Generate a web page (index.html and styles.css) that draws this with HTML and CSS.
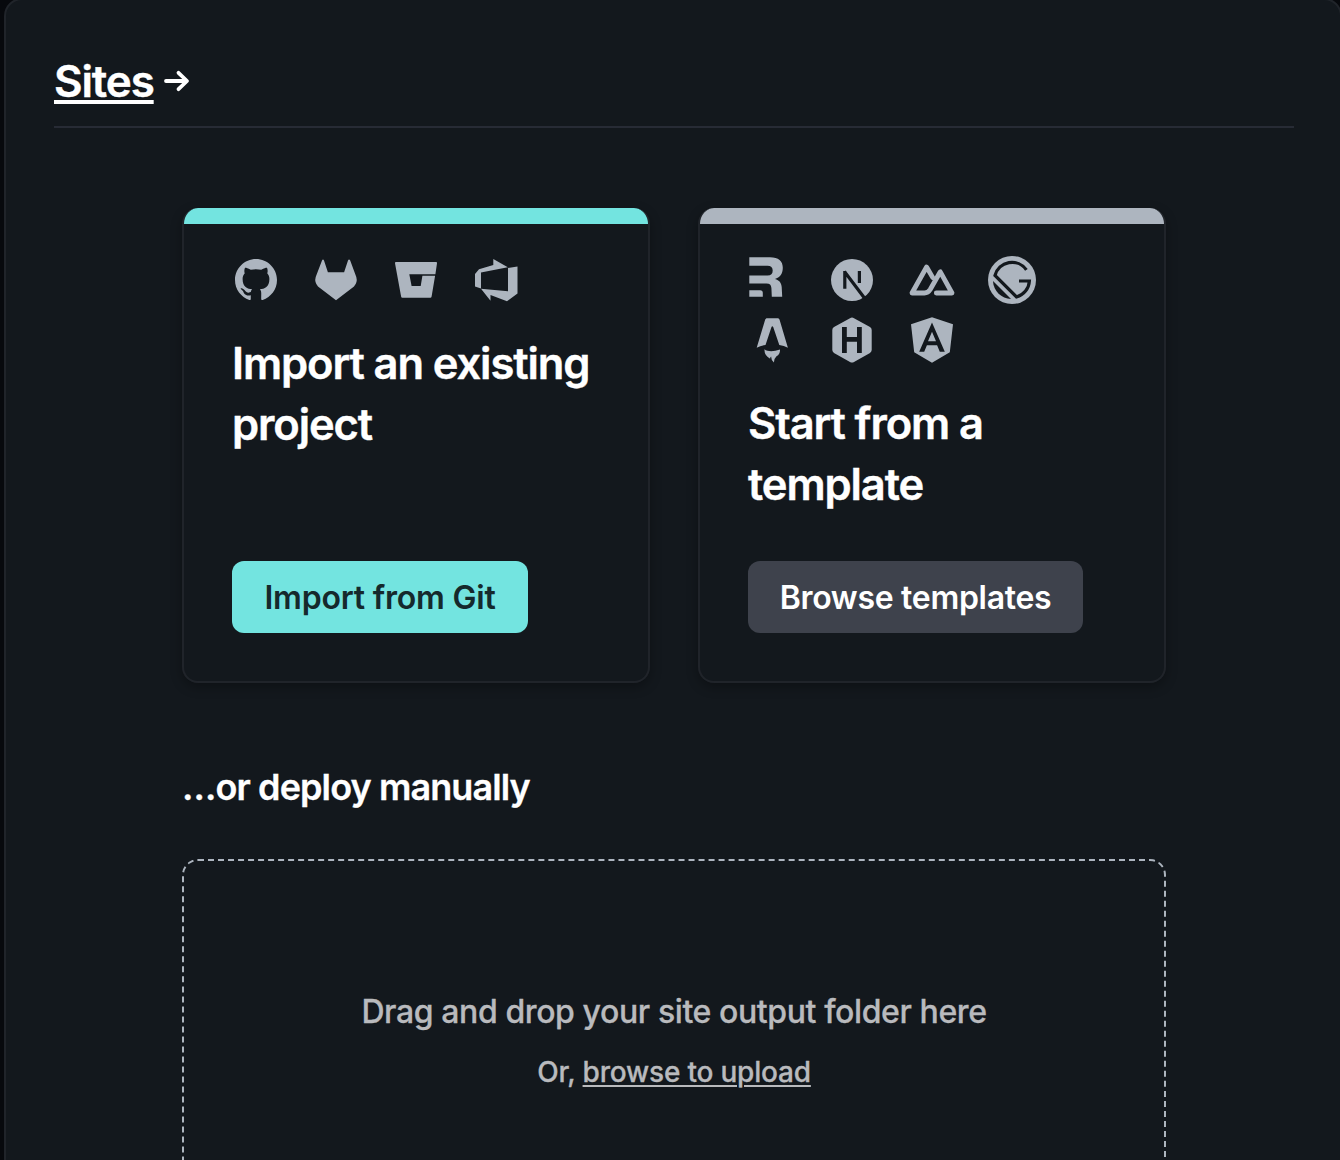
FILE: index.html
```html
<!DOCTYPE html>
<html lang="en">
<head>
<meta charset="utf-8">
<title>Sites</title>
<link rel="stylesheet" href="styles.css">
</head>
<body>
<main class="panel">
  <header class="panel-header">
    <h2 class="panel-title"><a class="title-link" href="#">Sites</a></h2>
    <svg class="arrow" viewBox="0 0 26 22"><path d="M2 11H22M14.5 2.8 23 11 14.5 19.2"/></svg>
  </header>
  <div class="content">
    <div class="cards">
      <section class="card card-primary">
        <div class="icons">
          <svg class="icon" viewBox="0 0 48 48"><path transform="translate(-1.2 -1.2) scale(2.1)" d="M12 2C6.477 2 2 6.477 2 12c0 4.42 2.865 8.17 6.839 9.49.5.092.682-.217.682-.482 0-.237-.008-.866-.013-1.7-2.782.603-3.369-1.34-3.369-1.34-.454-1.156-1.11-1.463-1.11-1.463-.908-.62.069-.608.069-.608 1.003.07 1.531 1.03 1.531 1.03.892 1.529 2.341 1.087 2.91.831.092-.646.35-1.086.636-1.336-2.22-.253-4.555-1.11-4.555-4.943 0-1.091.39-1.984 1.029-2.683-.103-.253-.446-1.27.098-2.647 0 0 .84-.269 2.75 1.025A9.578 9.578 0 0112 6.836c.85.004 1.705.114 2.504.336 1.909-1.294 2.747-1.025 2.747-1.025.546 1.377.203 2.394.1 2.647.64.699 1.028 1.592 1.028 2.683 0 3.842-2.339 4.687-4.566 4.935.359.309.678.919.678 1.852 0 1.336-.012 2.415-.012 2.743 0 .267.18.578.688.48C19.138 20.167 22 16.418 22 12c0-5.523-4.477-10-10-10z"/></svg>
          <svg class="icon" viewBox="0 0 48 48"><path d="M10 4.4Q11 2.6 12 4.4L15.9 16.3H32.1L36 4.4Q37 2.6 38.2 4.4L44.3 21Q45.8 26.2 42 30.4L24 44.2 6 30.4Q2.2 26.2 3.7 21Z"/></svg>
          <svg class="icon" viewBox="0 0 48 48"><path d="M4 6H44Q45.3 6 45 7.3L43.4 18.2H17.3L19.6 30H28.7L30.4 19.7H43.1L39.6 40.6Q39.4 41.8 38.3 41.8H10.4Q9.3 41.8 9.1 40.6L3 7.3Q2.8 6 4 6Z"/></svg>
          <svg class="icon" viewBox="0 0 48 48"><path d="M21.3 3 35.8 11.3 9 16.6V32.6L3 30.6V18L7 13.2 21.3 9ZM36 11.9 45.5 10.5V37.6L35 45.2 18.5 39V44.8L9 32.7 36 35.2Z"/></svg>
        </div>
        <h3 class="card-title">Import an existing project</h3>
        <button class="button button-primary">Import from Git</button>
      </section>
      <section class="card card-secondary">
        <div class="icons">
          <svg class="icon" viewBox="0 0 48 48"><path d="M1.3 1.3H22C30.5 1.3 34.8 5.2 34.8 11.8 34.8 18 31.7 21.7 27 22.9 31.3 24 33.4 26.7 33.7 31L34.2 40.8H23.8L23.4 32C23.2 28.8 21.7 27.4 18.5 27.4H1.3V19.6H19.5C23 19.6 24.7 18 24.7 14.6 24.7 11.5 23 9.8 19.5 9.8H1.3ZM1.3 34.2H12.2Q14.8 34.2 14.8 36.8V40.8H1.3Z"/></svg>
          <svg class="icon" viewBox="0 0 48 48"><circle cx="24" cy="24" r="21"/><path class="cut" stroke-width="3.2" d="M16.8 32.8V15M31.4 15V27M16.4 15.5 37.2 43"/></svg>
          <svg class="icon" viewBox="0 0 48 48"><path class="line" stroke-width="4.8" d="M28.3 37H44L32.3 15.8 22.2 33.5Q20 37 16.5 37H4L18.6 11 24.6 21.4"/></svg>
          <svg class="icon" viewBox="0 0 48 48"><circle cx="24" cy="24" r="24"/><path class="cut" stroke-width="3.2" d="M38.4 13.8A17.6 17.6 0 0 0 7 19.5L28.5 41A17.6 17.6 0 0 0 41.4 25H31"/><path class="hole" d="M5 25 23 43C13.5 42.8 5.4 35 5 25Z"/></svg>
          <svg class="icon" viewBox="0 0 48 48"><path d="M18.4 2.3H30.3L31.5 3.5 39.9 31.8Q36 29.7 31.3 29.1L25.2 10.9Q24.3 9.5 23.5 10.9L17.5 29.1Q12.8 29.7 8.7 31.8L17.2 3.5ZM16.5 33.2Q17.5 34.5 19.5 34.8 25 36 32 33.4 32.4 38 28.5 40.3 26.4 42 25.9 46.4 23 44.5 23.2 40.5 22 41 22.2 42.8 16 39.5 16.5 33.2Z"/></svg>
          <svg class="icon" viewBox="0 0 48 48"><path d="M22 2.2Q24 .9 26 2.2L42 11.1Q43.7 12.2 43.7 14V34Q43.7 35.8 42 36.9L26 45.9Q24 47.1 22 45.9L6 36.9Q4.3 35.8 4.3 34V14Q4.3 12.2 6 11.1Z"/><path class="cut" stroke-width="4.8" d="M16.4 11V37M31.4 11V37M16.4 23.4H31.4"/></svg>
          <svg class="icon" viewBox="0 0 48 48"><path fill-rule="evenodd" d="M24 1.3 45 8.3 41.8 36.3 24 46.7 6.2 36.3 3 8.3ZM24 6.6 11.2 35.7H16.2L18.9 29.3H29.1L31.8 35.7H36.8ZM24 15.8 28 25.3H20Z"/></svg>
        </div>
        <h3 class="card-title">Start from a template</h3>
        <button class="button button-secondary">Browse templates</button>
      </section>
    </div>
    <h3 class="deploy-title">…or deploy manually</h3>
    <div class="dropzone">
      <p class="drop-text">Drag and drop your site output folder here</p>
      <p class="drop-alt">Or, <a class="drop-link" href="#">browse to upload</a></p>
    </div>
  </div>
</main>
</body>
</html>
```
FILE: styles.css
```css
* { box-sizing: border-box; }
html, body { height: 100%; }
body {
  margin: 0;
  overflow: hidden;
  background: #07090d;
  color: #fff;
  font-family: Inter, "Liberation Sans", sans-serif;
}
h2, h3, p { margin: 0; font-weight: 600; }
a { color: inherit; }
.panel {
  height: 1300px;
  margin: -2px -2px 0 4px;
  padding: 0 46px 0 48px;
  border: 2px solid #20242a;
  border-radius: 18px;
  background: #13181d;
}
.panel-header {
  display: flex;
  align-items: center;
  gap: 10px;
  height: 128px;
  padding-top: 36px;
  border-bottom: 2px solid #272b35;
}
.panel-title { font-size: 44px; line-height: 60px; letter-spacing: -1.15px; -webkit-text-stroke: .4px #fff; }
.title-link { text-decoration-thickness: 4px; text-underline-offset: 3px; text-decoration-skip-ink: none; }
.arrow { width: 26px; height: 22px; fill: none; stroke: #fff; stroke-width: 3.8; stroke-linecap: round; stroke-linejoin: round; }
.content { width: 984px; margin: 80px auto 0 128px; }
.cards { display: grid; grid-template-columns: 468px 468px; gap: 48px; }
.card {
  display: flex;
  flex-direction: column;
  align-items: flex-start;
  height: 475px;
  padding: 0 48px 48px;
  border: 2px solid #20242a;
  border-top: 0;
  border-radius: 16px;
  background: linear-gradient(var(--accent) 16px, #13181d 16px);
  box-shadow: 0 4px 12px rgba(0, 0, 0, .3);
}
.card-primary { --accent: #73e4e0; }
.card-secondary { --accent: #adb5bf; }
.icons { display: flex; flex-wrap: wrap; gap: 12px 32px; width: 330px; margin-top: 48px; }
.icon { width: 48px; height: 48px; fill: #adb5bf; }
.cut { fill: none; stroke: #13181d; }
.line { fill: none; stroke: #adb5bf; stroke-linejoin: round; stroke-linecap: round; }
.hole { fill: #13181d; }
.card-title { margin-top: 29px; font-size: 43.5px; line-height: 61px; letter-spacing: -1.1px; -webkit-text-stroke: .4px #fff; }
.button {
  height: 72px;
  margin-top: auto;
  padding: 2px 0 0;
  border: 0;
  border-radius: 12px;
  font: 600 32px/70px Inter, "Liberation Sans", sans-serif;
  letter-spacing: -.3px;
}
.button-primary { width: 296px; background: #73e4e0; color: #15292c; letter-spacing: -.2px; }
.button-secondary { width: 335px; background: #3e424c; color: #fff; }
.deploy-title { margin-top: 79px; font-size: 36px; line-height: 50px; letter-spacing: -.9px; -webkit-text-stroke: .3px #fff; }
.dropzone {
  display: flex;
  flex-direction: column;
  align-items: center;
  height: 420px;
  margin-top: 47px;
  padding-top: 127px;
  border: 2px dashed #adb5bf;
  border-radius: 16px;
  color: #b9babd;
}
.drop-text { font-size: 32px; line-height: 48px; font-weight: 500; letter-spacing: -.4px; -webkit-text-stroke: .3px #b9babd; }
.drop-alt { margin-top: 14px; font-size: 28px; line-height: 44px; font-weight: 500; letter-spacing: -.2px; -webkit-text-stroke: .3px #b9babd; }
.drop-link { text-decoration-thickness: 2px; text-underline-offset: 3px; }
```
